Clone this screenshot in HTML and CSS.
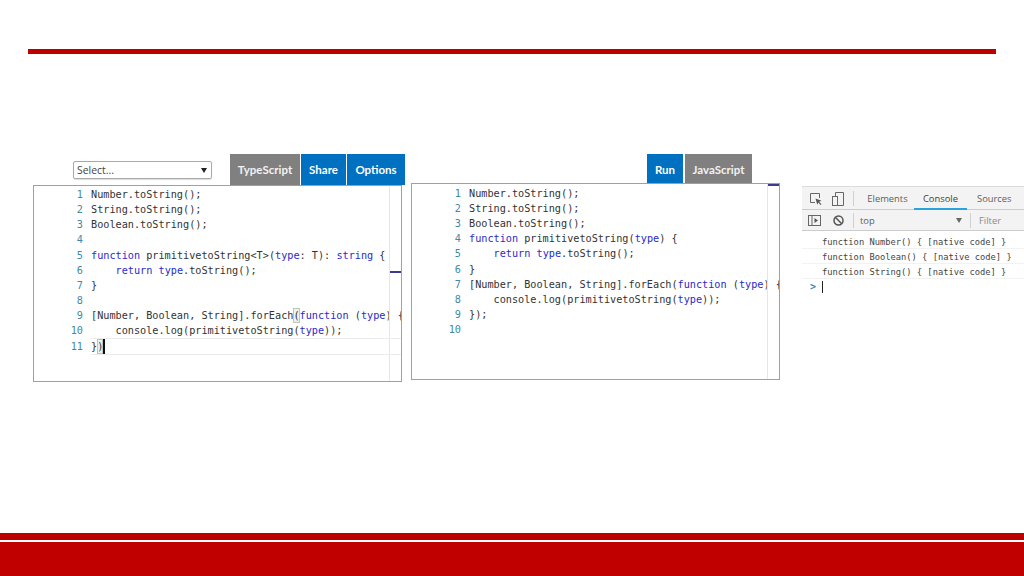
FILE: index.html
```html
<!DOCTYPE html>
<html lang="en">
<head>
<meta charset="utf-8">
<title>TypeScript playground slide</title>
<link rel="stylesheet" href="styles.css">
</head>
<body>
<div class="slide">
  <div class="top-rule"></div>
  <div class="stage">
    <section class="pane pane-left">
      <div class="toolbar">
        <div class="select"><span>Select...</span><i class="select-arrow"></i></div>
        <div class="tabs">
          <div class="tab tab-grey tab-ts">TypeScript</div>
          <div class="tab tab-blue tab-share">Share</div>
          <div class="tab tab-blue tab-options">Options</div>
        </div>
      </div>
      <div class="editor editor-left">
        <div class="line"><span class="ln">1</span><code>Number.toString();</code></div>
        <div class="line"><span class="ln">2</span><code>String.toString();</code></div>
        <div class="line"><span class="ln">3</span><code>Boolean.toString();</code></div>
        <div class="line"><span class="ln">4</span><code></code></div>
        <div class="line"><span class="ln">5</span><code><b>function</b> primitivetoString&lt;T&gt;(<b>type</b>: T): <b>string</b> {</code></div>
        <div class="line"><span class="ln">6</span><code>    <b>return</b> <b>type</b>.toString();</code></div>
        <div class="line"><span class="ln">7</span><code>}</code></div>
        <div class="line"><span class="ln">8</span><code></code></div>
        <div class="line"><span class="ln">9</span><code>[Number, Boolean, String].forEach<em class="match">(</em><b>function</b> (<b>type</b>) {</code></div>
        <div class="line"><span class="ln">10</span><code>    console.log(primitivetoString(<b>type</b>));</code></div>
        <div class="line line-current"><span class="ln">11</span><code>}<em class="match">)</em><i class="caret"></i></code></div>
      </div>
    </section>
    <section class="pane pane-right">
      <div class="toolbar toolbar-right">
        <div class="tab tab-blue tab-run">Run</div>
        <div class="tab tab-grey tab-js">JavaScript</div>
      </div>
      <div class="editor editor-right">
        <div class="line"><span class="ln">1</span><code>Number.toString();</code></div>
        <div class="line"><span class="ln">2</span><code>String.toString();</code></div>
        <div class="line"><span class="ln">3</span><code>Boolean.toString();</code></div>
        <div class="line"><span class="ln">4</span><code><b>function</b> primitivetoString(<b>type</b>) {</code></div>
        <div class="line"><span class="ln">5</span><code>    <b>return</b> <b>type</b>.toString();</code></div>
        <div class="line"><span class="ln">6</span><code>}</code></div>
        <div class="line"><span class="ln">7</span><code>[Number, Boolean, String].forEach(<b>function</b> (<b>type</b>) {</code></div>
        <div class="line"><span class="ln">8</span><code>    console.log(primitivetoString(<b>type</b>));</code></div>
        <div class="line"><span class="ln">9</span><code>});</code></div>
        <div class="line"><span class="ln">10</span><code></code></div>
      </div>
    </section>
    <section class="devtools">
      <div class="dt-row dt-tabs">
        <svg class="dt-icon" width="12" height="12" viewBox="0 0 12 12" fill="none" stroke="#666" stroke-width="1"><path d="M5 9.500H.5V.5H9.500V5"/><path d="M5.500 5.500 11.500 7.800l-2.400 1L11.500 11.200l-.8.800-2.400-2.400-1 2.200z" fill="#555" stroke="none"/></svg>
        <svg class="dt-icon" width="12" height="14" viewBox="0 0 12 14" fill="none" stroke="#666" stroke-width="1"><rect x=".5" y="4.500" width="5" height="9"/><path d="M3.500 4.500V.5h8v13H5.500"/></svg>
        <span class="dt-sep"></span>
        <span class="dt-tab dt-elements">Elements</span>
        <span class="dt-tab dt-console">Console</span>
        <span class="dt-tab dt-sources">Sources</span>
      </div>
      <div class="dt-row dt-filter">
        <svg class="dt-icon" width="13" height="11" viewBox="0 0 13 11" fill="none" stroke="#666" stroke-width="1"><rect x=".5" y=".5" width="12" height="10"/><path d="M4 .5v10"/><path d="M6.500 3 10 5.500 6.500 8z" fill="#555" stroke="none"/></svg>
        <svg class="dt-icon dt-block" width="11" height="11" viewBox="0 0 11 11" fill="none" stroke="#555" stroke-width="1.500"><circle cx="5.500" cy="5.500" r="4.500"/><path d="M2.300 2.300l6.400 6.400"/></svg>
        <span class="dt-sep"></span>
        <span class="dt-top">top</span>
        <i class="dt-arrow"></i>
        <span class="dt-sep dt-sep-filter"></span>
        <span class="dt-filter-text">Filter</span>
      </div>
      <div class="dt-log">function Number() { [native code] }</div>
      <div class="dt-log">function Boolean() { [native code] }</div>
      <div class="dt-log">function String() { [native code] }</div>
      <div class="dt-prompt"><span class="dt-chevron">&gt;</span><i class="dt-caret"></i></div>
    </section>
  </div>
  <div class="footer">
    <div class="footer-strip"></div>
    <div class="footer-block"></div>
  </div>
</div>
</body>
</html>
```
FILE: styles.css
```css
* { box-sizing: border-box; }
html, body { margin: 0; padding: 0; background: #fff; }
.slide {
  width: 1024px;
  height: 576px;
  overflow: hidden;
  display: flex;
  flex-direction: column;
  background: #fff;
}
.top-rule {
  height: 5px;
  margin: 49px 28px 0;
  background: #c00000;
  flex: none;
}
.stage {
  flex: 1;
  display: flex;
  align-items: flex-start;
  padding: 100px 0 0 33px;
}
.pane-left { width: 372px; flex: none; }
.pane-right { width: 369px; flex: none; margin-left: 6px; }
.toolbar { display: flex; align-items: flex-start; height: 31px; }
.toolbar-right { height: 29px; padding-left: 236px; }
.select {
  width: 140px;
  height: 18px;
  margin: 7px 0 0 40px;
  padding: 0 4px 0 3px;
  display: flex;
  align-items: center;
  justify-content: space-between;
  border: 1px solid #a9a9a9;
  border-radius: 2px;
  box-shadow: 0 1px 1px #ddd;
  font: 10.400px "Open Sans", sans-serif;
  color: #444;
}
.select-arrow {
  width: 0;
  height: 0;
  border-left: 3px solid transparent;
  border-right: 3px solid transparent;
  border-top: 5px solid #222;
}
.tabs { display: flex; margin-left: 18px; }
.tab {
  height: 31px;
  display: flex;
  align-items: center;
  justify-content: center;
  color: #fff;
  font: 700 11.500px Lato, sans-serif;
}
.toolbar-right .tab { height: 30px; }
.tab-grey { background: #808080; color: #f2f2f2; }
.tab-blue { background: #0070c0; }
.tab-ts { width: 70px; }
.tab-share { width: 45px; margin-left: 1px; }
.tab-options { width: 58px; margin-left: 1px; }
.tab-run { width: 36px; }
.tab-js { width: 67px; margin-left: 2px; }

.editor {
  position: relative;
  width: 369px;
  height: 197px;
  border: 1px solid #a0a0a0;
  overflow: hidden;
  padding-top: 1px;
  background: #fff;
}
.editor-right { padding-top: 1.800px; }
.editor::before {
  content: "";
  position: absolute;
  top: 0;
  bottom: 0;
  right: 11px;
  width: 1px;
  background: #e6e6e6;
}
.editor::after {
  content: "";
  position: absolute;
  right: 0;
  width: 11px;
  height: 1.500px;
  background: #3b3b8f;
}
.editor-left::after { top: 85px; }
.editor-right::after { top: 0; }
.line {
  display: flex;
  height: 15.160px;
  line-height: 15px;
  font-family: "DejaVu Sans Mono", monospace;
  font-size: 10.200px;
  white-space: pre;
}
.ln {
  flex: none;
  width: 49px;
  text-align: right;
  margin-right: 8px;
  color: #3f89a3;
}
code { font: inherit; color: #333; flex: none; }
code b { font-weight: normal; color: #2a2ac8; }
code em { font-style: normal; }
.match {
  display: inline-block;
  height: 15px;
  box-shadow: inset 0 0 0 1px #b9c9b9;
  background: #eef2ee;
  vertical-align: top;
}
.line-current code {
  flex: 1;
  box-shadow: 0 -1px 0 #ececec, 0 1px 0 #ececec;
  position: relative;
}
.caret {
  display: inline-block;
  width: 2px;
  height: 15px;
  background: #111;
  vertical-align: top;
}

.devtools { flex: 1; margin: 32px 0 0 22px; min-width: 0; }
.dt-row {
  display: flex;
  align-items: center;
  background: #f3f3f3;
  font: 9.400px "Open Sans", sans-serif;
  color: #5f5f5f;
  white-space: nowrap;
}
.dt-tabs {
  height: 24px;
  padding: 1px 0 0 8px;
  border-top: 1px solid #dcdcdc;
  border-bottom: 1px solid #ccc;
}
.dt-filter {
  height: 21px;
  padding-left: 6px;
  border-bottom: 1px solid #ccc;
}
.dt-icon { flex: none; }
.dt-tabs .dt-icon + .dt-icon { margin-left: 10px; }
.dt-block { margin-left: 12px; }
.dt-sep { width: 1px; height: 15px; background: #d0d0d0; margin-left: 9px; flex: none; }
.dt-tab { height: 22px; display: flex; align-items: center; justify-content: center; }
.dt-elements { margin-left: 7px; width: 53px; }
.dt-console { width: 53px; box-shadow: inset 0 -2px 0 #2aa3dc; color: #444; }
.dt-sources { margin-left: 10px; }
.dt-top { margin-left: 6px; width: 96px; }
.dt-arrow {
  width: 0;
  height: 0;
  border-left: 3px solid transparent;
  border-right: 3px solid transparent;
  border-top: 5px solid #666;
}
.dt-sep-filter { margin-left: 8px; }
.dt-filter-text { margin-left: 8px; color: #8a8a8a; }
.dt-log {
  height: 15.200px;
  line-height: 16px;
  padding-left: 20px;
  border-bottom: 1px solid #f2f2f2;
  font-family: "DejaVu Sans Mono", monospace;
  font-size: 8.750px;
  color: #444;
  white-space: pre;
}
.dt-filter + .dt-log { margin-top: 2.500px; }
.dt-prompt { display: flex; align-items: center; height: 15px; padding-left: 8px; }
.dt-chevron { font: 600 10px "DejaVu Sans Mono", monospace; color: #3b8fc4; width: 12px; }
.dt-caret { width: 1px; height: 12px; background: #222; }

.footer { flex: none; }
.footer-strip { height: 7px; background: #c00000; }
.footer-block { height: 34px; margin-top: 2px; background: #c00000; }
```
